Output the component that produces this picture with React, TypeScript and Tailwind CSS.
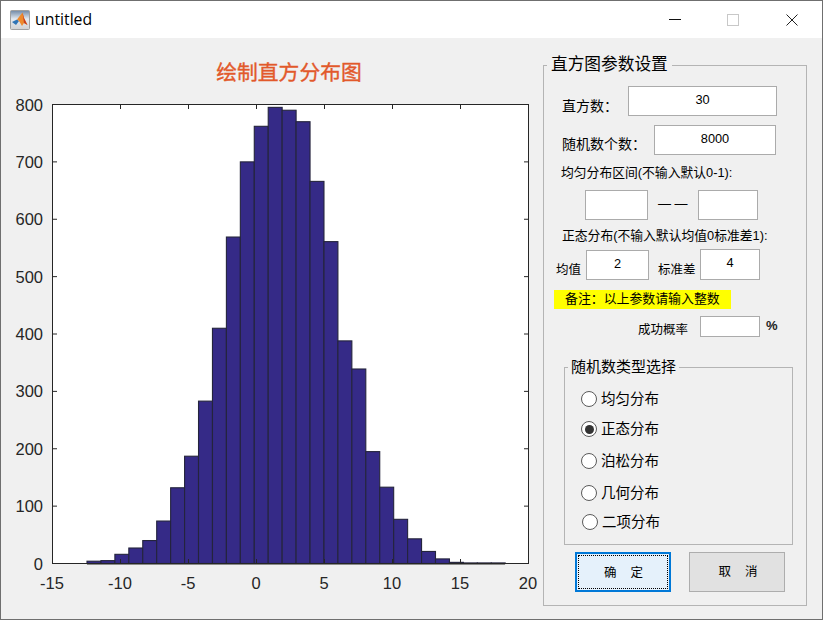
import React from "react";

const CJK = "font-['Liberation_Sans','Noto_Sans_CJK_SC',sans-serif]";

const values = [4, 5, 16, 27, 40, 74, 132, 187, 283, 410, 569, 700, 762, 795, 790, 770, 666, 561, 388, 339, 195, 133, 77, 43, 21, 8, 2, 1, 1, 1];

function Chart() {
  const X0 = 52.5, X1 = 528.5, Y0 = 563.5, Y1 = 104.5;
  const bw = 13.94;
  const bx = 87;
  const sy = (Y0 - Y1) / 800;
  const xt = [-15, -10, -5, 0, 5, 10, 15, 20];
  const yt = [0, 100, 200, 300, 400, 500, 600, 700, 800];
  const px = (v: number) => X0 + ((v + 15) * (X1 - X0)) / 35;
  const py = (v: number) => Y0 - v * sy;
  return (
    <svg width="542" height="526" viewBox="1 92 542 526" className="block">
      <rect x={X0} y={Y1} width={X1 - X0} height={Y0 - Y1} fill="#fff" />
      {values.map((v, i) => (
        <rect key={i} x={bx + i * bw} y={py(v)} width={bw} height={v * sy} fill="#352a87" stroke="#24243c" strokeWidth="1.1" />
      ))}
      <line x1={87} x2={505} y1={564.5} y2={564.5} stroke="#8a8a8a" strokeWidth="1" />
      <rect x={X0} y={Y1} width={X1 - X0} height={Y0 - Y1} fill="none" stroke="#262626" strokeWidth="1" />
      {xt.map((t) => (
        <g key={t}>
          <line x1={px(t)} x2={px(t)} y1={Y0} y2={Y0 - 4.5} stroke="#262626" />
          <line x1={px(t)} x2={px(t)} y1={Y1} y2={Y1 + 4.5} stroke="#262626" />
          <text x={px(t) - 0.5} y={589} textAnchor="middle" fontSize="16.5" fill="#262626" fontFamily="Liberation Sans">{t}</text>
        </g>
      ))}
      {yt.map((t) => (
        <g key={t}>
          <line x1={X0} x2={X0 + 4.5} y1={py(t)} y2={py(t)} stroke="#262626" />
          <line x1={X1} x2={X1 - 4.5} y1={py(t)} y2={py(t)} stroke="#262626" />
          <text x={43} y={py(t) + 6} textAnchor="end" fontSize="16.5" fill="#262626" fontFamily="Liberation Sans">{t}</text>
        </g>
      ))}
    </svg>
  );
}

function MatlabIcon() {
  return (
    <svg width="20" height="20" viewBox="0 0 20 20" className="block shrink-0">
      <defs>
        <linearGradient id="bg" x1="0" y1="0" x2="0" y2="1">
          <stop offset="0" stopColor="#6f88a6" />
          <stop offset="0.45" stopColor="#e4e9ef" />
          <stop offset="1" stopColor="#d2d2d2" />
        </linearGradient>
      </defs>
      <rect x="0.5" y="0.5" width="19" height="19" rx="1" fill="url(#bg)" stroke="#a0a0a0" />
      <path d="M2 12 L7 9.5 L9 11 L6 15 Z" fill="#2f74b5" />
      <path d="M7 9.5 L10.5 5 L12.5 2.5 L14 8 L17.5 15 L14 13 L12 16 L9 11 Z" fill="#ee8a2c" />
      <path d="M12.5 2.5 L14 8 L17.5 15 L14 13 Z" fill="#c8401f" />
    </svg>
  );
}

function Field({ value, className }: { value?: string; className: string }) {
  return (
    <div className={`border border-[#ababab] bg-white text-center text-[12.8px] leading-[26px] text-black ${className}`}>
      {value}
    </div>
  );
}

function Radio({ label, checked, className }: { label: string; checked?: boolean; className: string }) {
  return (
    <div className={`flex h-[20px] items-center ${className}`}>
      <div className="flex h-[16px] w-[16px] shrink-0 items-center justify-center rounded-full border-[1.5px] border-[#5a5a5a] bg-white">
        {checked && <div className="h-[9px] w-[9px] rounded-full bg-[#333333]" />}
      </div>
      <span className="ml-[4px] text-[14.5px] leading-[20px] text-black">{label}</span>
    </div>
  );
}

export default function App() {
  return (
    <div className={`box-border flex h-[620px] w-[823px] flex-col overflow-hidden border border-[#6f6f6f] bg-[#f0f0f0] ${CJK}`}>
      <div className="flex h-[37px] shrink-0 items-center bg-white pl-[9px]">
        <MatlabIcon />
        <span className="ml-[5px] font-['Open_Sans',sans-serif] text-[15.8px] text-black">untitled</span>
        <div className="ml-auto flex items-center">
          <svg width="12" height="12" viewBox="0 0 12 12" className="block">
            <line x1="0" x2="12" y1="5.5" y2="5.5" stroke="#111" />
          </svg>
          <svg width="12" height="12" viewBox="0 0 12 12" className="ml-[46px] block">
            <rect x="0.5" y="0.5" width="11" height="11" fill="none" stroke="#c8c8c8" />
          </svg>
          <svg width="12" height="12" viewBox="0 0 12 12" className="ml-[47px] mr-[24px] block">
            <path d="M0.5 0.5 L11.5 11.5 M11.5 0.5 L0.5 11.5" stroke="#222" fill="none" />
          </svg>
        </div>
      </div>

      <div className="flex min-h-0 flex-1">
        <div className="w-[542px] shrink-0">
          <div className="h-[54px] pt-[21px] text-center text-[20.8px] leading-[28px] text-[#e2592b] [-webkit-text-stroke:0.35px_#e2592b]">
            <span className="relative left-[17px]">绘制直方分布图</span>
          </div>
          <Chart />
        </div>

        <fieldset className="mt-[17px] box-border h-[551px] w-[264px] shrink-0 border border-[#b4b4b4]">
          <legend className="ml-[3px] h-[20px] px-[4px] text-[16.7px] leading-[20px] text-black">直方图参数设置</legend>

          <div className="mt-[11px] flex h-[30px]">
            <div className="ml-[18px] w-[66px] self-end text-[14px] leading-[20px]">直方数：</div>
            <Field value="30" className="w-[149px]" />
          </div>
          <div className="mt-[9px] flex h-[30px]">
            <div className="ml-[18px] w-[92px] self-end text-[14px] leading-[22px]">随机数个数：</div>
            <Field value="8000" className="w-[122px]" />
          </div>
          <div className="ml-[17px] mt-[8px] h-[20px] text-[12.8px] leading-[20px]">均匀分布区间(不输入默认0-1):</div>
          <div className="mt-[7px] flex h-[30px]">
            <Field className="ml-[41px] w-[63px]" />
            <div className="ml-[10px] w-[40px] text-[13px] leading-[28px]">— —</div>
            <Field className="w-[60px]" />
          </div>
          <div className="ml-[18px] mt-[6px] h-[20px] text-[12.8px] leading-[20px]">正态分布(不输入默认均值0标准差1):</div>
          <div className="mt-[3px] flex h-[31px]">
            <div className="ml-[12px] w-[30px] self-end text-[12.5px] leading-[20px]">均值</div>
            <Field value="2" className="mt-[1px] w-[63px]" />
            <div className="ml-[9px] w-[42px] self-end text-[12.5px] leading-[20px]">标准差</div>
            <Field value="4" className="w-[60px]" />
          </div>
          <div className="ml-[10px] mt-[10px] h-[19px] w-[177px] bg-[#ffff00] pl-[11px] text-[12.9px] leading-[18px] text-black">备注：以上参数请输入整数</div>
          <div className="mt-[7px] flex h-[21px]">
            <div className="ml-[94px] w-[62px] text-[12.5px] leading-[28px]">成功概率</div>
            <Field className="w-[60px]" />
            <div className="ml-[6px] text-[13px] font-bold leading-[20px] text-[#222222]">%</div>
          </div>

          <fieldset className="ml-[20px] mt-[20px] box-border h-[188px] w-[229px] border border-[#b4b4b4]">
            <legend className="ml-[3px] h-[20px] px-[3px] text-[15px] leading-[20px] text-black">随机数类型选择</legend>
            <Radio label="均匀分布" className="ml-[16px] mt-[12px]" />
            <Radio label="正态分布" checked className="ml-[16px] mt-[10px]" />
            <Radio label="泊松分布" className="ml-[16px] mt-[12px]" />
            <Radio label="几何分布" className="ml-[16px] mt-[12px]" />
            <Radio label="二项分布" className="ml-[17px] mt-[9px]" />
          </fieldset>

          <div className="mt-[7px] flex">
            <div className="ml-[31px] box-border flex h-[40px] w-[96px] items-center justify-center border-2 border-[#0078d7] bg-[#e5f1fb] p-px">
              <div className="flex h-full w-full items-center justify-center border border-dotted border-black pl-px pt-[2px] text-[12.5px] whitespace-pre">确    定</div>
            </div>
            <div className="ml-[18px] box-border flex h-[40px] w-[96px] items-center justify-center border border-[#adadad] bg-[#e1e1e1] pl-[2px] pt-px text-[12.5px] whitespace-pre">取    消</div>
          </div>
        </fieldset>
      </div>
    </div>
  );
}
